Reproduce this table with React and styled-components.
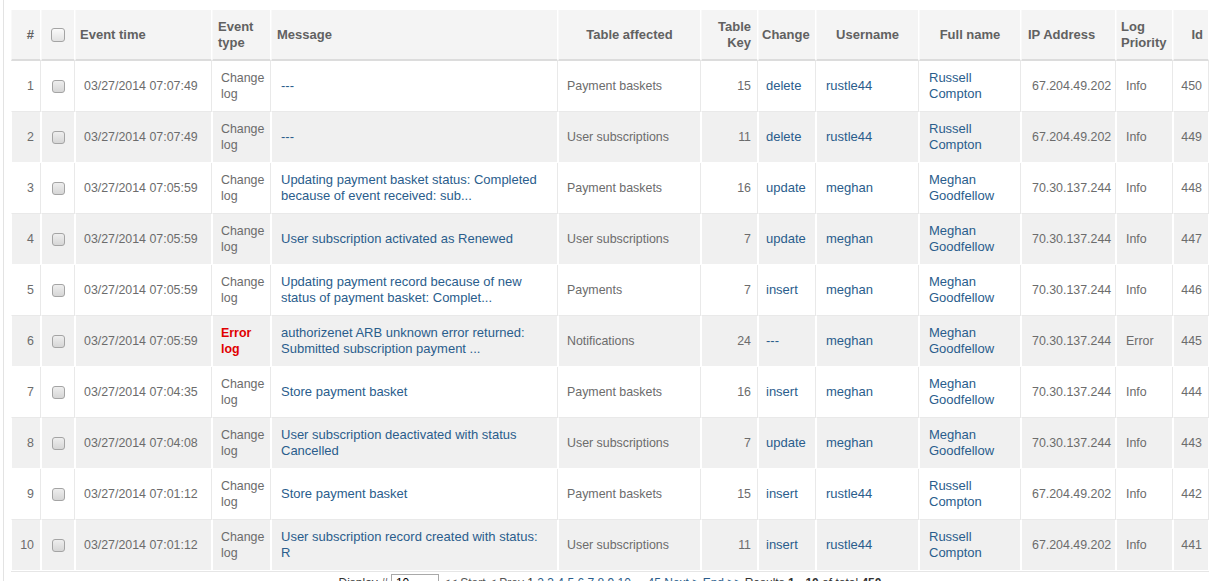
import React from 'react';
import styled, { createGlobalStyle } from 'styled-components';

const Global = createGlobalStyle`
  html, body { margin: 0; padding: 0; background: #fff; }
  body { font-family: "Liberation Sans", Arial, sans-serif; }
`;

const Page = styled.div`
  padding: 0 2px 0 3px;
`;

const Frame = styled.div`
  border-left: 1px solid #e3e3e3;
  padding: 10px 0 0 7px;
  min-height: 581px;
  box-sizing: border-box;
`;

const Table = styled.table`
  width: 1198px;
  table-layout: fixed;
  border-collapse: separate;
  border-spacing: 0;
  border-bottom: 1px solid #e6e6e6;
`;

const Th = styled.th`
  height: 51px;
  box-sizing: border-box;
  background: #f4f4f4;
  border-bottom: 2px solid #dcdcdc;
  border-right: 1px solid #fff;
  border-left: 1px solid #f9f9f9;
  padding: 0 ${p => p.$pr ?? 5}px 0 ${p => p.$pl ?? 5}px;
  text-align: ${p => p.$align || 'left'};
  font-size: 13px;
  font-weight: bold;
  color: #616161;
  line-height: 16px;
  vertical-align: middle;
`;

const Row = styled.tr`
  background: ${p => (p.$alt ? '#f0f0f0' : '#fff')};
`;

const Td = styled.td`
  height: 51px;
  box-sizing: border-box;
  padding: 0 ${p => p.$pr ?? 6}px 0 ${p => p.$pl ?? 9}px;
  text-align: ${p => p.$align || 'left'};
  font-size: 12.4px;
  color: #6c6c6c;
  line-height: 16px;
  vertical-align: middle;
  border-left: 1px solid #fff;
  border-right: 1px solid ${p => (p.$alt ? '#fff' : '#e9e9e9')};
  border-bottom: 1px solid ${p => (p.$alt ? '#fff' : '#e9e9e9')};
  overflow: hidden;
`;

const Link = styled.a`
  color: #2a5d8c;
  font-size: 13px;
  text-decoration: none;
  cursor: pointer;
`;

const ErrorType = styled.span`
  color: #e00000;
  font-weight: bold;
`;

const Check = styled.input.attrs({ type: 'checkbox' })`
  appearance: none;
  -webkit-appearance: none;
  margin: 0;
  display: inline-block;
  vertical-align: middle;
  width: ${p => (p.$big ? 14 : 13)}px;
  height: ${p => (p.$big ? 14 : 13)}px;
  border: 1px solid #a4a4a4;
  border-radius: 3px;
  box-sizing: border-box;
  background: ${p => (p.$big
    ? 'linear-gradient(#fafafa, #e2e2e2)'
    : 'linear-gradient(#eeeeee, #d6d6d6)')};
`;

const Pager = styled.div`
  text-align: center;
  font-size: 12px;
  color: #333;
  margin-top: 2px;
  line-height: 18px;
  white-space: nowrap;
`;

const SelectBox = styled.span`
  display: inline-flex;
  align-items: center;
  justify-content: space-between;
  width: 48px;
  height: 18px;
  box-sizing: border-box;
  border: 1px solid #a9a9a9;
  background: #fff;
  padding: 0 3px 0 4px;
  margin: 0 4px 0 3px;
  vertical-align: top;
  font-size: 12px;
  color: #000;
`;

const Muted = styled.span`
  color: #555;
`;

const PageLink = styled.a`
  color: #2a5d8c;
  text-decoration: none;
`;

const Strong = styled.b`
  font-weight: bold;
`;

const cols = [30, 34, 137, 59, 287, 143, 57, 58, 103, 102, 95, 57, 36];

const RC = ['rustle44', 'Russell Compton', '67.204.49.202'];
const MG = ['meghan', 'Meghan Goodfellow', '70.30.137.244'];

const rows = [
  [1, '03/27/2014 07:07:49', false, '---', 'Payment baskets', 15, 'delete', RC, 'Info', 450],
  [2, '03/27/2014 07:07:49', false, '---', 'User subscriptions', 11, 'delete', RC, 'Info', 449],
  [3, '03/27/2014 07:05:59', false, 'Updating payment basket status: Completed because of event received: sub...', 'Payment baskets', 16, 'update', MG, 'Info', 448],
  [4, '03/27/2014 07:05:59', false, 'User subscription activated as Renewed', 'User subscriptions', 7, 'update', MG, 'Info', 447],
  [5, '03/27/2014 07:05:59', false, 'Updating payment record because of new status of payment basket: Complet...', 'Payments', 7, 'insert', MG, 'Info', 446],
  [6, '03/27/2014 07:05:59', true, 'authorizenet ARB unknown error returned: Submitted subscription payment ...', 'Notifications', 24, '---', MG, 'Error', 445],
  [7, '03/27/2014 07:04:35', false, 'Store payment basket', 'Payment baskets', 16, 'insert', MG, 'Info', 444],
  [8, '03/27/2014 07:04:08', false, 'User subscription deactivated with status Cancelled', 'User subscriptions', 7, 'update', MG, 'Info', 443],
  [9, '03/27/2014 07:01:12', false, 'Store payment basket', 'Payment baskets', 15, 'insert', RC, 'Info', 442],
  [10, '03/27/2014 07:01:12', false, 'User subscription record created with status: R', 'User subscriptions', 11, 'insert', RC, 'Info', 441],
];

export default function App() {
  return (
    <Page>
      <Global />
      <Frame>
        <Table>
          <colgroup>
            {cols.map((w, i) => <col key={i} style={{ width: w }} />)}
          </colgroup>
          <thead>
            <tr>
              <Th $align="right" $pr={6}>#</Th>
              <Th $align="center"><Check $big readOnly /></Th>
              <Th $pl={4}>Event time</Th>
              <Th $pr={2}>Event type</Th>
              <Th $pl={5}>Message</Th>
              <Th $align="center">Table affected</Th>
              <Th $align="right" $pr={6}>Table Key</Th>
              <Th $pl={3} $pr={2}>Change</Th>
              <Th $align="center">Username</Th>
              <Th $align="center">Full name</Th>
              <Th $pl={6}>IP Address</Th>
              <Th $pl={4} $pr={2}>Log Priority</Th>
              <Th $align="right" $pr={5}>Id</Th>
            </tr>
          </thead>
          <tbody>
            {rows.map(([n, time, err, msg, tbl, key, change, person, prio, id]) => {
              const alt = n % 2 === 0;
              return (
                <Row key={n} $alt={alt}>
                  <Td $alt={alt} $align="right" $pr={6} $pl={2}>{n}</Td>
                  <Td $alt={alt} $align="center" $pl={0} $pr={0}><Check readOnly /></Td>
                  <Td $alt={alt} $pl={8}>{time}</Td>
                  <Td $alt={alt} $pl={8} $pr={2}>{err ? <ErrorType>Error log</ErrorType> : 'Change log'}</Td>
                  <Td $alt={alt} $pl={9} $pr={8}><Link>{msg}</Link></Td>
                  <Td $alt={alt} $pl={8}>{tbl}</Td>
                  <Td $alt={alt} $align="right" $pr={6}>{key}</Td>
                  <Td $alt={alt} $pl={7} $pr={2}><Link>{change}</Link></Td>
                  <Td $alt={alt} $pl={9}><Link>{person[0]}</Link></Td>
                  <Td $alt={alt} $pl={9}><Link>{person[1]}</Link></Td>
                  <Td $alt={alt} $pl={10} $pr={2}>{person[2]}</Td>
                  <Td $alt={alt} $pl={9} $pr={2}>{prio}</Td>
                  <Td $alt={alt} $align="right" $pr={6} $pl={2}>{id}</Td>
                </Row>
              );
            })}
          </tbody>
        </Table>
        <Pager>
          Display #
          <SelectBox>
            <span>10</span>
            <svg width="8" height="5" viewBox="0 0 8 5"><path d="M0 0h8L4 5z" fill="#000" /></svg>
          </SelectBox>
          <Muted>&lt;&lt; Start &lt; Prev </Muted>
          1{' '}
          {[2, 3, 4, 5, 6, 7, 8, 9, 10].map(k => (
            <React.Fragment key={k}><PageLink>{k}</PageLink>{' '}</React.Fragment>
          ))}
          ... <PageLink>45</PageLink> <PageLink>Next &gt;</PageLink> <PageLink>End &gt;&gt;</PageLink>{' '}
          Results <Strong>1 - 10</Strong> of total <Strong>450</Strong>
        </Pager>
      </Frame>
    </Page>
  );
}
